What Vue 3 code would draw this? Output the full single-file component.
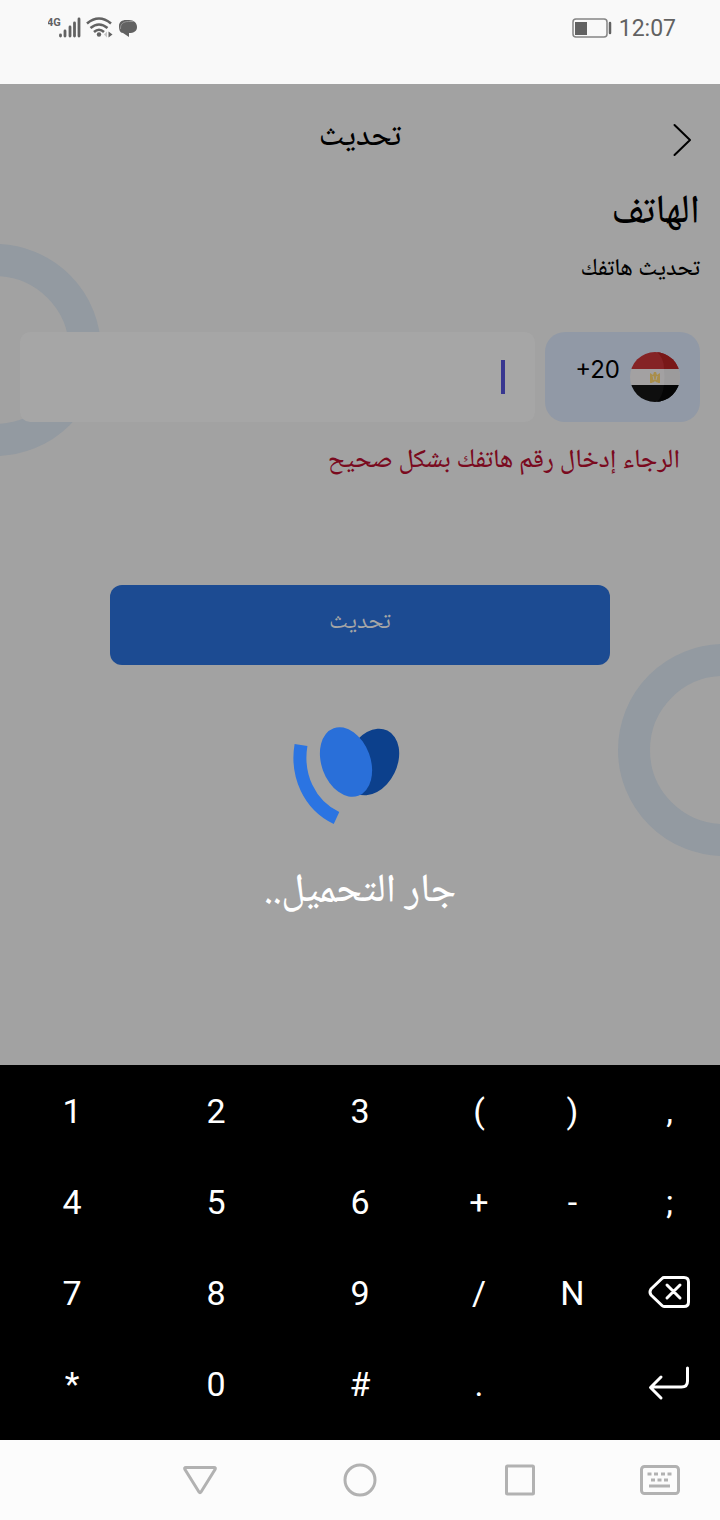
<script setup>
import { ref } from 'vue'

const phone = ref('')
const keys = [
  '1', '2', '3', '(', ')', ',',
  '4', '5', '6', '+', '-', ';',
  '7', '8', '9', '/', 'N', 'backspace',
  '*', '0', '#', '.', ' ', 'enter',
]

function press(key) {
  if (key === 'backspace') phone.value = phone.value.slice(0, -1)
  else if (key !== 'enter') phone.value += key
}
</script>

<template>
  <div class="screen">
    <header class="status">
      <div class="status-group">
        <svg width="92" height="28" viewBox="0 0 92 28" aria-hidden="true">
          <text x="-1" y="12" class="network">4G</text>
          <g stroke="#626262" stroke-width="2.800" stroke-linecap="round">
            <path d="M12.500 22v-1M17 22v-5M22 22v-9M26.500 22v-13M31 22v-17" />
          </g>
          <g fill="none" stroke="#626262" stroke-width="2.600">
            <path d="M39 9.500q12-10 24 0M42.500 14q8.500-7 17 0M46 18q5-4.500 10 0" />
          </g>
          <circle cx="51" cy="20.500" r="2.200" fill="#626262" />
          <path d="M60.500 17.500v6l4-3z" fill="#626262" />
          <path d="M59 17.500v6l-3-3z" fill="#c4c4c4" />
          <path d="M71 12c0-4 3-6 7-6h3c5 0 8 3 8 7s-3 6-8 6v4l-6-4c-3 0-4-3-4-7z" fill="#626262" />
          <path d="M72.500 15v-1c0-4 3-6.500 8-6.500h5" fill="none" stroke="#a8a8a8" stroke-width="0.700" />
        </svg>
      </div>
      <div class="status-group">
        <svg width="40" height="20" viewBox="0 0 40 20" aria-hidden="true">
          <rect x="1" y="1" width="34" height="18" rx="3" fill="none" stroke="#858585" stroke-width="1.500" />
          <rect x="3" y="4" width="12" height="13" fill="#626262" />
          <path d="M38 5v10" stroke="#626262" stroke-width="2.500" stroke-linecap="round" />
        </svg>
        <time class="clock">12:07</time>
      </div>
    </header>

    <main class="page" dir="rtl">
      <div class="ring ring-start"></div>
      <div class="ring ring-end"></div>

      <div class="topbar">
        <button class="back" type="button" aria-label="رجوع">
          <svg width="20" height="34" viewBox="0 0 20 34" aria-hidden="true">
            <path d="M2.500 2L18 17 2.500 32" fill="none" stroke="#000" stroke-width="2" stroke-linecap="round" stroke-linejoin="round" />
          </svg>
        </button>
        <h1 class="title">تحديث</h1>
      </div>

      <form class="form" @submit.prevent>
        <h2 class="heading">الهاتف</h2>
        <label class="hint" for="phone">تحديث هاتفك</label>
        <div class="phone-row">
          <button class="country" type="button">
            <svg width="50" height="50" viewBox="0 0 50 50" aria-hidden="true">
              <defs><clipPath id="disc"><circle cx="25" cy="25" r="25" /></clipPath></defs>
              <g clip-path="url(#disc)">
                <path d="M0 0h50v17H0z" fill="#852325" />
                <path d="M0 17h50v16H0z" fill="#a3a1a2" />
                <path d="M0 33h50v17H0z" fill="#0e0e0e" />
                <path d="M27 0q7 6 7 17h16V0z" fill="#791818" />
                <path d="M34 17q1 8 0 16h16V17z" fill="#9c9b9c" />
                <path d="M34 33q-1 11-7 17h23V33z" fill="#050505" />
              </g>
              <path d="M20 21l3 2 1-3h2l1 3 3-2v10h-3l-2-2-2 2h-3z" fill="#a98e4b" />
              <path d="M23 24l1 4M27 24l-1 4M22 31h6" stroke="#a3a1a2" stroke-width="1" />
            </svg>
            <span class="code" dir="ltr">+20</span>
          </button>
          <div class="field">
            <span class="caret"></span>
            <input id="phone" v-model="phone" class="input" type="tel" />
          </div>
        </div>
        <p class="error">الرجاء إدخال رقم هاتفك بشكل صحيح</p>
        <button class="submit" type="submit">تحديث</button>
      </form>

      <div class="loader" role="status">
        <svg class="logo" width="134" height="100" viewBox="28 0 134 100" aria-hidden="true">
          <ellipse cx="107" cy="37" rx="25" ry="35" transform="rotate(26 107 37)" fill="#0c408c" />
          <ellipse cx="81" cy="37" rx="24.500" ry="36" transform="rotate(-20 81 37)" fill="#296fd9" />
          <path d="M36 20C31 50 44 80 71.500 93" fill="none" stroke="#2b74e2" stroke-width="13" />
        </svg>
        <p class="loading">جار التحميل..</p>
      </div>
    </main>

    <section class="keypad" aria-label="Keypad">
      <button v-for="key in keys" :key="key" class="key" type="button" :aria-label="key" @click="press(key)">
        <svg v-if="key === 'backspace'" width="42" height="34" viewBox="1 1 42 34" class="key-icon" aria-hidden="true">
          <path d="M16 2.500h20q4.500 0 4.500 4.500v20q0 4.500-4.500 4.500H16q-1 0-2-1L3 20q-2-3 0-6L14 3.500q1-1 2-1zM19 10l13 13M32 10L19 23" />
        </svg>
        <svg v-else-if="key === 'enter'" width="42" height="34" viewBox="1 1 42 34" class="key-icon" aria-hidden="true">
          <path d="M39.500 2v13q0 6-6 6H3M13 11L2.500 21.500 13 32" />
        </svg>
        <template v-else>{{ key }}</template>
      </button>
    </section>

    <nav class="navbar" aria-label="System">
      <button class="nav nav-first" type="button" aria-label="Back">
        <svg width="34" height="34" viewBox="0 0 34 34" aria-hidden="true">
          <path d="M3 4.500h28q2 0 1 2L18 29q-1 1.500-2 0L2 6.500q-1-2 1-2z" />
        </svg>
      </button>
      <button class="nav" type="button" aria-label="Home">
        <svg width="34" height="34" viewBox="0 0 34 34" aria-hidden="true"><circle cx="17" cy="17" r="15" /></svg>
      </button>
      <button class="nav" type="button" aria-label="Recents">
        <svg width="34" height="34" viewBox="0 0 34 34" aria-hidden="true"><rect x="3.500" y="3" width="27" height="28" rx="1" /></svg>
      </button>
      <button class="nav" type="button" aria-label="Keyboard">
        <svg width="42" height="34" viewBox="0 0 42 34" aria-hidden="true">
          <rect x="2.500" y="3.500" width="37" height="27" rx="3" />
          <path stroke-width="3" d="M8.500 11h4M15 11h4M22 11h4M28.500 11h4M12 17h4M18.500 17h4M25 17h4M10 23h21" />
        </svg>
      </button>
    </nav>
  </div>
</template>

<style scoped>
.screen {
  min-height: 100vh;
  display: flex;
  flex-direction: column;
  font-family: "Noto Naskh Arabic UI", "Noto Naskh Arabic", "DejaVu Sans", sans-serif;
}
button {
  border: 0;
  padding: 0;
  background: none;
  color: inherit;
  font: inherit;
}
h1, h2, p { margin: 0; font-weight: 500; }
svg { display: block; flex: none; }
.status {
  display: flex;
  justify-content: space-between;
  align-items: flex-start;
  height: 84px;
  box-sizing: border-box;
  padding: 14px 44px 0 48px;
  background: #f9f9f9;
}
.status-group { display: flex; align-items: center; gap: 7px; height: 28px; }
.network { font: 700 11px Roboto, sans-serif; fill: #626262; }
.clock { font: 23px/28px Roboto, sans-serif; color: #626262; padding-top: 2px; }
.page {
  position: relative;
  overflow: hidden;
  flex: 1;
  background: #a2a2a2;
  color: #000;
}
.ring {
  position: absolute;
  width: 212px;
  height: 212px;
  box-sizing: border-box;
  border: 32px solid #939aa1;
  border-radius: 50%;
}
.ring-start { left: -111px; top: 160px; }
.ring-end { right: -110px; top: 560px; }
.topbar {
  display: grid;
  grid-template-columns: 48px 1fr 48px;
  align-items: center;
  height: 112px;
  padding: 0 14px;
}
.back { display: grid; place-items: center; height: 48px; }
.title { text-align: center; font-size: 32px; line-height: 40px; padding-bottom: 6px; }
.form { position: relative; display: flex; flex-direction: column; padding: 0 20px; }
.heading { font-size: 40px; line-height: 34px; }
.hint { font-size: 24px; line-height: 32px; padding-top: 23px; font-weight: 500; }
.phone-row { display: flex; gap: 10px; height: 90px; margin-top: 47px; }
.country {
  flex: none;
  display: flex;
  align-items: center;
  gap: 10px;
  padding: 0 20px 0 30px;
  border-radius: 20px;
  background: #9199a6;
}
.code { font: 24px/32px Inter, sans-serif; padding-bottom: 14px; }
.field {
  flex: 1;
  min-width: 0;
  display: flex;
  align-items: center;
  padding: 0 30px;
  border-radius: 10px;
  background: #a6a6a6;
}
.caret { width: 4px; height: 34px; background: #383790; }
.input {
  flex: 1;
  min-width: 0;
  border: 0;
  outline: 0;
  background: transparent;
  font: 24px/32px Roboto, sans-serif;
}
.error { font-size: 26px; line-height: 32px; margin-top: 23px; padding: 0 20px; color: #7a0a1e; }
.submit {
  height: 80px;
  margin: 108px 90px 0;
  padding-bottom: 8px;
  border-radius: 12px;
  background: #1c4b92;
  color: #a6a6a6;
  font-size: 24px;
}
.loader {
  position: relative;
  display: flex;
  flex-direction: column;
  align-items: center;
  gap: 43px;
  padding-top: 60px;
  color: #fff;
}
.loading { font-size: 40px; line-height: 48px; }
.keypad {
  display: grid;
  grid-template-columns: 144fr 144fr 144fr 94fr 93fr 101fr;
  grid-auto-rows: 91px;
  height: 375px;
  background: #000;
}
.key {
  display: grid;
  place-items: center;
  color: #fff;
  font: 34px/40px Roboto, sans-serif;
}
.key-icon { overflow: visible; fill: none; stroke: #fff; stroke-width: 3; stroke-linecap: round; stroke-linejoin: round; }
.navbar {
  display: grid;
  grid-template-columns: 120fr 160fr 160fr 160fr 120fr;
  height: 80px;
  background: #fcfcfc;
}
.nav { display: grid; place-items: center; }
.nav-first { grid-column: 2; }
.nav svg { fill: none; stroke: #b2b2b2; stroke-width: 3; }
</style>

<style>
body { margin: 0; }
</style>
